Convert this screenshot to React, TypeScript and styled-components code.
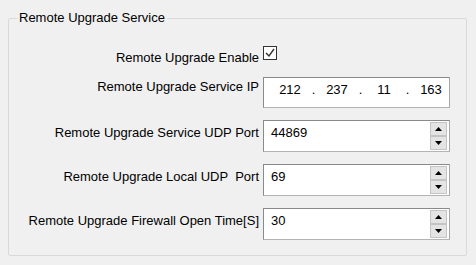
import React from "react";
import styled, { createGlobalStyle } from "styled-components";

const Global = createGlobalStyle`
  html, body { margin: 0; padding: 0; background: #f0f0f0; }
  body { font-family: "Liberation Sans", Arial, sans-serif; font-size: 13px; color: #000; }
  #root { width: 476px; height: 265px; }
`;

const Group = styled.fieldset`
  box-sizing: border-box;
  margin: 11px 0 0 8px;
  width: 459px;
  height: 245px;
  padding: 0;
  border: 1px solid #d9d9d9;
  border-radius: 2px;
`;

const Legend = styled.legend`
  margin-left: 8px;
  padding: 0 2px;
  line-height: 14px;
  font-size: 13px;
  color: #000;
`;

const Form = styled.div`
  display: grid;
  grid-template-columns: 250px 187px;
  column-gap: 4px;
  row-gap: 12px;
  padding-top: 21px;
`;

const Label = styled.div<{ $top: number }>`
  text-align: right;
  line-height: 14px;
  padding-top: ${(p) => p.$top}px;
  white-space: pre;
`;

const Check = styled.div`
  box-sizing: border-box;
  width: 14px;
  height: 14px;
  border: 1px solid #333;
  background: #fff;
  display: flex;
  align-items: center;
  justify-content: center;
`;

const Box = styled.div<{ $h: number }>`
  box-sizing: border-box;
  height: ${(p) => p.$h}px;
  border: 1px solid #8a8a8a;
  border-right-color: #a8a8a8;
  border-bottom-color: #b4b4b4;
  background: #fff;
  display: flex;
  align-items: flex-start;
  position: relative;
`;

const Octet = styled.span`
  width: 36px;
  text-align: center;
  line-height: 14px;
  padding-top: 5px;
`;

const Dot = styled.span`
  width: 11px;
  text-align: center;
  line-height: 14px;
  padding-top: 5px;
`;

const IpStart = styled.span`
  width: 8px;
`;

const Value = styled.span`
  flex: 1;
  line-height: 14px;
  padding: 5px 0 0 7px;
`;

const Spin = styled.div`
  display: flex;
  flex-direction: column;
  margin: 1px 2px 0 0;
`;

const SpinBtn = styled.div`
  box-sizing: border-box;
  width: 17px;
  height: 14px;
  background: #e4e4e4;
  border: 1px solid #c4c4c4;
  display: flex;
  align-items: center;
  justify-content: center;
`;

const Arrow = ({ up }: { up?: boolean }) => (
  <svg width="7" height="4" viewBox="0 0 7 4">
    {up ? <polygon points="0,4 7,4 3.5,0" fill="#000" /> : <polygon points="0,0 7,0 3.5,4" fill="#000" />}
  </svg>
);

const Spinner = ({ value }: { value: string }) => (
  <Box $h={32}>
    <Value>{value}</Value>
    <Spin>
      <SpinBtn>
        <Arrow up />
      </SpinBtn>
      <SpinBtn>
        <Arrow />
      </SpinBtn>
    </Spin>
  </Box>
);

export default function App() {
  return (
    <>
      <Global />
      <Group>
        <Legend>Remote Upgrade Service</Legend>
        <Form>
          <Label $top={5}>Remote Upgrade Enable</Label>
          <div>
            <Check>
              <svg width="12" height="12" viewBox="0 0 12 12">
                <polyline points="2,6 5,9 10,2" fill="none" stroke="#333" strokeWidth="1.4" />
              </svg>
            </Check>
          </div>

          <Label $top={3}>Remote Upgrade Service IP</Label>
          <Box $h={31}>
            <IpStart />
            <Octet>212</Octet>
            <Dot>.</Dot>
            <Octet>237</Octet>
            <Dot>.</Dot>
            <Octet>11</Octet>
            <Dot>.</Dot>
            <Octet>163</Octet>
          </Box>

          <Label $top={6}>Remote Upgrade Service UDP Port</Label>
          <Spinner value="44869" />

          <Label $top={6}>{"Remote Upgrade Local UDP  Port"}</Label>
          <Spinner value="69" />

          <Label $top={6}>Remote Upgrade Firewall Open Time[S]</Label>
          <Spinner value="30" />
        </Form>
      </Group>
    </>
  );
}
